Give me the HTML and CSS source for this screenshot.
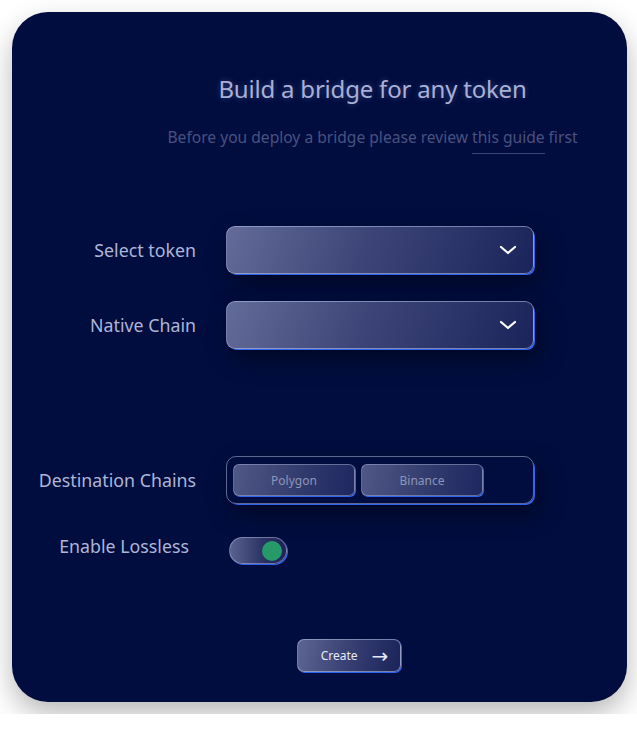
FILE: index.html
```html
<!DOCTYPE html>
<html lang="en">
<head>
  <meta charset="UTF-8">
  <meta name="viewport" content="width=device-width, initial-scale=1.0">
  <title>Bridge</title>
  <link rel="stylesheet" href="styles.css">
</head>
<body>
  <div id="card">
    <div class="head">
      <h1 class="title">Build a bridge for any token</h1>
      <p class="sub">Before you deploy a bridge please review <span class="guide">this guide</span> first</p>
    </div>

    <div class="form">
      <div class="label">Select token</div>
      <div class="select">
        <svg width="18" height="12" viewBox="0 0 18 12"><path d="M2 3l7 6 7-6" fill="none" stroke="#fff" stroke-width="2.2" stroke-linecap="round" stroke-linejoin="round"/></svg>
      </div>

      <div class="label">Native Chain</div>
      <div class="select">
        <svg width="18" height="12" viewBox="0 0 18 12"><path d="M2 3l7 6 7-6" fill="none" stroke="#fff" stroke-width="2.2" stroke-linecap="round" stroke-linejoin="round"/></svg>
      </div>

      <div class="label dest">Destination Chains</div>
      <div class="chains dest">
        <div class="chip">Polygon</div>
        <div class="chip">Binance</div>
      </div>

      <div class="label lossless">Enable Lossless</div>
      <div class="toggle-row">
        <div class="toggle"><div class="knob"></div></div>
      </div>
    </div>

    <div class="foot">
      <div class="create">Create <span class="arrow">&rarr;</span></div>
    </div>
  </div>
</body>
</html>
```

FILE: styles.css
```css
*{
  margin: 0px;
  padding: 0px;
  box-sizing: border-box;
}
body{
  background: #fff;
  font-family: "Noto Sans", "DejaVu Sans", sans-serif;
}
#card{
  margin: 12px;
  width: 615px;
  height: 690px;
  border-radius: 36px;
  background-color: #010d3f;
  box-shadow: 0 12px 28px rgba(0,0,0,0.28);
  display: flex;
  flex-direction: column;
}
.head{
  padding-top: 60px;
  padding-left: 106px;
  display: flex;
  flex-direction: column;
  align-items: center;
}
.title{
  font-size: 24px;
  font-weight: 400;
  color: #a9b0d6;
  letter-spacing: -0.2px;
  text-shadow: 0 0 6px rgba(150,160,230,0.35);
}
.sub{
  margin-top: 21px;
  font-size: 15.6px;
  color: #48517f;
}
.guide{
  display: inline-block;
  padding-bottom: 5px;
  border-bottom: 1px solid #3a4479;
}
.form{
  margin-top: 72px;
  display: grid;
  grid-template-columns: 184px 308px;
  column-gap: 30px;
  row-gap: 27px;
  align-items: center;
}
.label{
  text-align: right;
  font-size: 17.8px;
  color: #aeb5d6;
}
.label.dest{
  margin-top: 80px;
}
.chains.dest{
  margin-top: 80px;
}
.label.lossless{
  padding-right: 7px;
  margin-top: 3px;
  align-self: start;
}
.select{
  height: 48px;
  border-radius: 9px;
  background: linear-gradient(110deg, #636b98 0%, #3d4578 45%, #1b245a 100%);
  border: 1px solid rgba(190,198,235,0.55);
  box-shadow: 2px 2px 0 -1px #2e63f0, 6px 10px 24px rgba(0,0,0,0.45);
  display: flex;
  align-items: center;
  justify-content: flex-end;
  padding-right: 16px;
}
.chains{
  height: 48px;
  border-radius: 10px;
  border: 1px solid rgba(170,178,215,0.55);
  box-shadow: 2px 2px 0 -1px #2e63f0, 6px 10px 24px rgba(0,0,0,0.45);
  display: flex;
  align-items: center;
  gap: 6px;
  padding-left: 6px;
}
.chip{
  width: 122px;
  height: 32px;
  border-radius: 6px;
  background: linear-gradient(100deg, #4f5886 0%, #323b6d 55%, #1e2760 100%);
  border: 1px solid rgba(180,188,225,0.45);
  box-shadow: 1px 1px 0 0 #2e63f0;
  display: flex;
  align-items: center;
  justify-content: center;
  font-size: 12px;
  color: #8d95ba;
}
.toggle-row{
  padding-left: 3px;
  margin-top: 6px;
}
.toggle{
  width: 58px;
  height: 27px;
  border-radius: 14px;
  background: linear-gradient(90deg, #5a6290 0%, #2a3264 60%, #1c2458 100%);
  border: 1px solid rgba(180,188,225,0.5);
  box-shadow: 1px 1px 0 0 #2e63f0;
  display: flex;
  align-items: center;
  justify-content: flex-end;
  padding-right: 4px;
}
.knob{
  width: 20px;
  height: 20px;
  border-radius: 50%;
  background-color: #279a6a;
}
.foot{
  margin-top: auto;
  padding-bottom: 30px;
  display: flex;
  justify-content: center;
  padding-left: 58px;
}
.create{
  width: 104px;
  height: 33px;
  border-radius: 7px;
  background: linear-gradient(100deg, #5d6593 0%, #343c70 55%, #1b245a 100%);
  border: 1px solid rgba(190,198,235,0.55);
  box-shadow: 1px 1px 0 0 #2e63f0;
  display: flex;
  align-items: center;
  justify-content: center;
  gap: 14px;
  padding-left: 12px;
  font-size: 12px;
  color: #e6e9f5;
}
.arrow{
  font-size: 20px;
  line-height: 1;
}
```
